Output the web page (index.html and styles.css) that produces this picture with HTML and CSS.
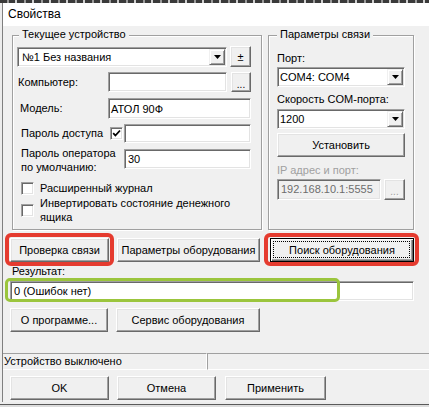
FILE: index.html
```html
<!DOCTYPE html>
<html lang="ru">
<head>
<meta charset="utf-8">
<title>Свойства</title>
<link rel="stylesheet" href="styles.css">
</head>
<body>
<div class="topstrip"></div>
<div class="window">
  <div class="titlebar">Свойства</div>
  <div class="content">
    <div class="groups">
      <div class="group g-left">
        <div class="legend l-left">Текущее устройство</div>
        <div class="row r1">
          <div class="combo w-device"><span class="ctext t-device">№1 Без названия</span><span class="drop"><svg width="7" height="4" viewBox="0 0 7 4"><path d="M0 0h7L3.5 4z"/></svg></span></div>
          <button class="btn b-pm">±</button>
        </div>
        <div class="row r2">
          <span class="lbl lw1">Компьютер:</span>
          <div class="edit w-comp"></div>
          <button class="btn b-dots">...</button>
        </div>
        <div class="row r3">
          <span class="lbl lw2">Модель:</span>
          <div class="combo w-model"><span class="ctext t-model">АТОЛ 90Ф</span></div>
        </div>
        <div class="row r4">
          <span class="lbl lw3">Пароль доступа</span>
          <span class="chk"><svg width="9" height="9" viewBox="0 0 9 9"><path d="M1.2 4.2l2.2 2.3 4.6-5" fill="none" stroke="#000" stroke-width="1.8"/></svg></span>
          <div class="edit w-pass"></div>
        </div>
        <div class="row r5">
          <span class="lbl lw4 two">Пароль оператора<br>по умолчанию:</span>
          <div class="edit w-pass">30</div>
        </div>
        <div class="row r6">
          <span class="chk c-left"></span>
          <span class="clabel">Расширенный журнал</span>
        </div>
        <div class="row r7">
          <span class="chk c-left"></span>
          <span class="clabel two">Инвертировать состояние денежного<br>ящика</span>
        </div>
      </div>
      <div class="group g-right">
        <div class="legend l-right">Параметры связи</div>
        <div class="lbl rl1">Порт:</div>
        <div class="combo w-full c-port"><span class="ctext">COM4: COM4</span><span class="drop"><svg width="7" height="4" viewBox="0 0 7 4"><path d="M0 0h7L3.5 4z"/></svg></span></div>
        <div class="lbl rl2">Скорость COM-порта:</div>
        <div class="combo w-full c-speed"><span class="ctext">1200</span><span class="drop"><svg width="7" height="4" viewBox="0 0 7 4"><path d="M0 0h7L3.5 4z"/></svg></span></div>
        <button class="btn b-set">Установить</button>
        <div class="lbl rl3 disabled">IP адрес и порт:</div>
        <div class="row r-ip">
          <div class="edit e-ip">192.168.10.1:5555</div>
          <button class="btn b-dots b-ipdots">...</button>
        </div>
      </div>
    </div>

    <div class="row btnrow1">
      <button class="btn b-check mark-red">Проверка связи</button>
      <button class="btn b-params">Параметры оборудования</button>
      <button class="btn b-search btn-default mark-red">Поиск оборудования</button>
    </div>

    <div class="lbl res-lbl">Результат:</div>
    <div class="edit res-field">0 (Ошибок нет)</div>

    <div class="row btnrow2">
      <button class="btn b-about">О программе...</button>
      <button class="btn b-service">Сервис оборудования</button>
    </div>

    <div class="status">
      <div class="panel p1">Устройство выключено</div>
      <div class="panel p2"></div>
    </div>

    <div class="row btnrow3">
      <button class="btn b-ok">OK</button>
      <button class="btn b-cancel">Отмена</button>
      <button class="btn b-apply">Применить</button>
    </div>
  </div>
</div>
<div class="bottomstrip"></div>
</body>
</html>
```

FILE: styles.css
```css
*, *::before, *::after { box-sizing: border-box; }
html, body { margin: 0; padding: 0; }
body {
  width: 429px;
  height: 407px;
  overflow: hidden;
  background: #ececec;
  font-family: "Liberation Sans", Arial, sans-serif;
  font-size: 11px;
  color: #000;
}
.topstrip {
  height: 3px;
  background: repeating-linear-gradient(90deg, #3a3a3a 0 7px, #9a9a9a 7px 9px, #3a3a3a 9px 15px, #d0d0d0 15px 17px);
}
.window {
  margin-left: 2px;
  width: 440px;
  height: 399px;
  border-left: 1px solid #7f7f7f;
  background: #f0f0f0;
  display: flex;
  flex-direction: column;
}
.titlebar {
  height: 23px;
  background: #fff;
  font-size: 12px;
  line-height: 23px;
  padding-left: 5px;
}
.content { display: flex; flex-direction: column; }
.row { display: flex; align-items: center; }
.lbl { line-height: 13px; white-space: nowrap; }
.two { line-height: 14px; }
.disabled { color: #a0a0a0; }

/* group boxes */
.groups { display: flex; gap: 6px; margin: 9px 0 0 9px; }
.group {
  height: 195px;
  border: 1px solid #a0a0a0;
  box-shadow: inset 1px 1px 0 #fff, 1px 1px 0 #fff;
  display: flex;
  flex-direction: column;
}
.g-left { width: 250px; padding: 0 10px 0 4px; }
.g-right { width: 146px; padding: 0 8px; }
.legend {
  width: max-content;
  height: 13px;
  line-height: 13px;
  margin-top: -8px;
  padding: 0 3px;
  background: #f0f0f0;
}
.l-left { margin-left: 2px; }
.l-right { margin-left: 0; }

/* controls */
.combo {
  display: flex;
  align-items: center;
  height: 20px;
  background: #fff;
  border: 1px solid;
  border-color: #a0a0a0 #fff #fff #a0a0a0;
  box-shadow: inset 1px 1px 0 #696969, inset -1px -1px 0 #e3e3e3;
  padding: 1px;
}
.ctext { flex: 1; padding-left: 1px; white-space: nowrap; }
.t-device { padding-left: 3px; }
.drop {
  width: 16px;
  height: 100%;
  display: flex;
  align-items: center;
  justify-content: center;
  background: #f0f0f0;
  border: 1px solid;
  border-color: #f0f0f0 #696969 #696969 #f0f0f0;
  box-shadow: inset 1px 1px 0 #fff, inset -1px -1px 0 #a0a0a0;
}
.edit {
  height: 20px;
  background: #fff;
  border: 1px solid;
  border-color: #a0a0a0 #fff #fff #a0a0a0;
  box-shadow: inset 1px 1px 0 #696969, inset -1px -1px 0 #e3e3e3;
  padding: 0 3px;
  line-height: 18px;
  white-space: nowrap;
}
.btn {
  font: inherit;
  color: #000;
  margin: 0;
  padding: 0;
  background: #f0f0f0;
  border: 1px solid;
  border-color: #fff #696969 #696969 #fff;
  box-shadow: inset -1px -1px 0 #a0a0a0, inset 1px 1px 0 #e3e3e3;
  text-align: center;
  white-space: nowrap;
  line-height: 14px;
}
.btn-default {
  position: relative;
  border: 1px solid #000;
  box-shadow: inset 1px 1px 0 #fff, inset -1px -1px 0 #696969, inset -2px -2px 0 #a0a0a0;
}
.btn-default::before {
  content: "";
  position: absolute;
  left: 2px; top: 2px; right: 3px; bottom: 3px;
  border: 1px dotted #000;
}
.mark-red { position: relative; }
.mark-red::after {
  content: "";
  position: absolute;
  top: -6px;
  height: 33px;
  border: 4px solid #e53b2f;
  border-radius: 6px;
}
.b-check::after { left: -6px; width: 109px; }
.b-search::after { left: -7px; width: 155px; }

.chk {
  width: 13px;
  height: 13px;
  flex: none;
  background: #fff;
  border: 1px solid;
  border-color: #a0a0a0 #fff #fff #a0a0a0;
  box-shadow: inset 1px 1px 0 #696969, inset -1px -1px 0 #e3e3e3;
  display: flex;
  align-items: center;
  justify-content: center;
}

/* left group rows */
.r1 { margin-top: 5px; height: 21px; }
.w-device { width: 210px; height: 20px; }
.b-pm { width: 21px; height: 21px; margin-left: 3px; line-height: 16px; }
.r2 { margin-top: 5px; height: 20px; }
.lw1 { width: 91px; padding-left: 1px; }
.w-comp { width: 119px; }
.b-dots { width: 20px; height: 20px; margin-left: 4px; line-height: 20px; font-size: 10px; padding-top: 2px; }
.r3 { margin-top: 6px; height: 21px; }
.lw2 { width: 91px; padding-left: 3px; }
.w-model { width: 143px; height: 21px; }
.r4 { margin-top: 5px; height: 19px; }
.lw3 { width: 93px; padding-left: 4px; }
.w-pass { width: 127px; height: 19px; margin-left: 1px; line-height: 17px; }
.r5 { margin-top: 6px; height: 20px; align-items: flex-start; }
.lw4 { width: 107px; padding-left: 4px; margin-top: -3px; }
.r5 .w-pass { height: 20px; margin-left: 0; line-height: 18px; }
.r6 { margin-top: 13px; height: 13px; }
.c-left { margin-left: 4px; }
.clabel { margin-left: 6px; line-height: 13px; white-space: nowrap; }
.clabel.two { line-height: 14px; }
.r7 { margin-top: 1px; }

/* right group */
.rl1 { margin-top: 11px; }
.w-full { width: 128px; }
.c-port { margin-top: 2px; }
.rl2 { margin-top: 6px; }
.c-speed { margin-top: 3px; }
.b-set { width: 128px; height: 24px; margin-top: 4px; }
.rl3 { margin-top: 7px; }
.r-ip { margin-top: 2px; height: 21px; }
.e-ip { width: 104px; height: 21px; background: #f0f0f0; color: #6d6d6d; line-height: 19px; }
.b-ipdots { width: 21px; height: 21px; margin-left: 3px; color: #a0a0a0; text-shadow: 1px 1px 0 #fff; }

/* bottom area */
.btnrow1 { margin-top: 8px; height: 24px; padding-left: 7px; }
.b-check { width: 99px; height: 24px; }
.b-params { width: 143px; height: 24px; margin-left: 8px; }
.b-search { width: 144px; height: 24px; margin-left: 10px; }
.res-lbl { margin-top: 3px; padding-left: 9px; }
.res-field {
  position: relative;
  margin: 3px 0 0 7px;
  width: 404px;
  height: 20px;
}
.res-field::after {
  content: "";
  position: absolute;
  left: -6px;
  top: -4px;
  width: 335px;
  height: 24px;
  border: 3px solid #9bc53d;
  border-radius: 5px;
}
.btnrow2 { margin-top: 7px; height: 24px; padding-left: 7px; }
.b-about { width: 98px; height: 24px; }
.b-service { width: 144px; height: 24px; margin-left: 8px; }

.status { display: flex; margin-top: 21px; height: 17px; }
.panel {
  height: 17px;
  border-top: 1px solid #a0a0a0;
  border-bottom: 1px solid #fff;
  line-height: 15px;
  white-space: nowrap;
}
.p1 { width: 204px; padding-left: 1px; border-right: 1px solid #fff; }
.p2 { flex: 1; border-left: 1px solid #a0a0a0; }

.btnrow3 { margin-top: 6px; height: 24px; padding-left: 7px; }
.b-ok { width: 99px; height: 24px; }
.b-cancel { width: 99px; height: 24px; margin-left: 8px; }
.b-apply { width: 101px; height: 24px; margin-left: 9px; }

.bottomstrip {
  margin-top: 2px;
  height: 3px;
  border-top: 1px solid #5a5a5a;
  background: #dcdcdc;
}
```
